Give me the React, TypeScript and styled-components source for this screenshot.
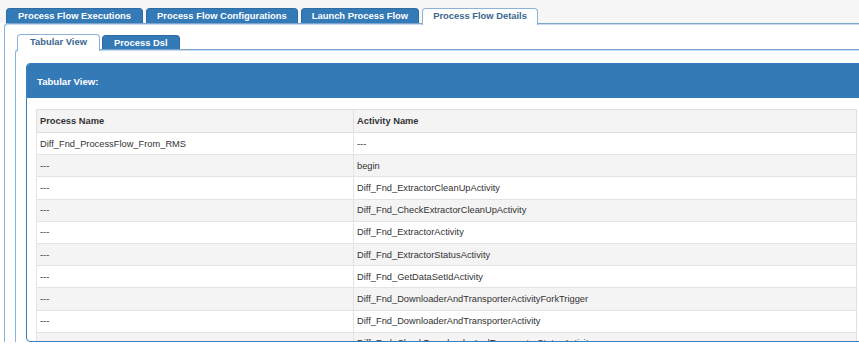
import styled, { createGlobalStyle } from "styled-components";

const GlobalStyle = createGlobalStyle`
  html, body {
    margin: 0;
    padding: 0;
    background: #fff;
    overflow: hidden;
  }
  body {
    font-family: "Liberation Sans", Arial, sans-serif;
    color: #333;
  }
`;

const Page = styled.div`
  width: 880px;
`;

const TabNav = styled.ul`
  display: flex;
  align-items: flex-end;
  gap: 3px;
  box-sizing: border-box;
  height: 23px;
  margin: 0;
  padding: 0 0 0 6px;
  list-style: none;
  background: #f6f6f6;
`;

const SubNav = styled.ul`
  display: flex;
  align-items: flex-end;
  gap: 2px;
  box-sizing: border-box;
  height: 15px;
  margin: 0;
  padding: 0 0 0 2px;
  list-style: none;
`;

const Tab = styled.li<{ $active?: boolean; $h: number; $px?: number }>`
  position: relative;
  z-index: 1;
  box-sizing: border-box;
  height: ${(p) => (p.$active ? p.$h + 2 : p.$h)}px;
  margin-bottom: ${(p) => (p.$active ? -2 : 0)}px;
  padding: 0 ${(p) => p.$px ?? 11}px;
  border: 1px solid ${(p) => (p.$active ? "#8cb2d8" : "#2e6da4")};
  border-bottom: none;
  border-radius: 4px 4px 0 0;
  background: ${(p) => (p.$active ? "#fff" : "#337ab7")};
  color: ${(p) => (p.$active ? "#3a6791" : "#fff")};
  font-size: 9.4px;
  font-weight: bold;
  line-height: ${(p) => p.$h - 1}px;
  white-space: nowrap;
  cursor: pointer;
`;

const Panel = styled.div<{ $pad: string }>`
  border-left: 1px solid #8cb2d8;
  border-top: 1px solid #7ba5ce;
  border-top-left-radius: 4px;
  box-shadow: inset 0 1px 0 #c5daee;
  padding: ${(p) => p.$pad};
`;

const OuterPanel = styled(Panel)`
  margin-left: 4px;
`;

const BluePanel = styled.section`
  width: 840px;
  border: 1px solid #3a7fbd;
  border-radius: 4px;
  overflow: hidden;
`;

const PanelHeading = styled.h3`
  display: flex;
  align-items: center;
  height: 34px;
  margin: 0;
  padding: 0 10px;
  background: #337ab7;
  color: #fff;
  font-size: 9.6px;
  font-weight: bold;
`;

const PanelBody = styled.div`
  box-sizing: border-box;
  height: 243px;
  padding: 11px 10px 0 9px;
  overflow: hidden;
`;

const Table = styled.table`
  width: 100%;
  border-collapse: collapse;
  table-layout: fixed;
  border: 1px solid #e0e0e0;
  font-size: 9.3px;
`;

const Th = styled.th`
  height: 22px;
  padding: 0 3px;
  border: 1px solid #e0e0e0;
  background: #f4f4f4;
  text-align: left;
  font-weight: bold;
  color: #333;
`;

const Row = styled.tr`
  &:nth-child(even) {
    background: #f4f4f4;
  }
`;

const Td = styled.td`
  height: 21.2px;
  padding: 0 3px;
  border-top: 1px solid #e3e3e3;
  border-left: 1px solid #e3e3e3;
  white-space: nowrap;
  color: #333;
`;

const rows: [string, string][] = [
  ["Diff_Fnd_ProcessFlow_From_RMS", "---"],
  ["---", "begin"],
  ["---", "Diff_Fnd_ExtractorCleanUpActivity"],
  ["---", "Diff_Fnd_CheckExtractorCleanUpActivity"],
  ["---", "Diff_Fnd_ExtractorActivity"],
  ["---", "Diff_Fnd_ExtractorStatusActivity"],
  ["---", "Diff_Fnd_GetDataSetIdActivity"],
  ["---", "Diff_Fnd_DownloaderAndTransporterActivityForkTrigger"],
  ["---", "Diff_Fnd_DownloaderAndTransporterActivity"],
  ["---", "Diff_Fnd_CheckDownloaderAndTransporterStatusActivity"],
  ["---", "Diff_Fnd_UploaderActivity"],
];

const topTabs = [
  "Process Flow Executions",
  "Process Flow Configurations",
  "Launch Process Flow",
  "Process Flow Details",
];

function App() {
  return (
    <Page>
      <GlobalStyle />
      <TabNav>
        {topTabs.map((t) => (
          <Tab
            key={t}
            $h={15}
            $px={t === "Process Flow Executions" ? 11 : 10}
            $active={t === "Process Flow Details"}
          >
            {t}
          </Tab>
        ))}
      </TabNav>
      <OuterPanel $pad="10px 0 0 10px">
        <SubNav>
          <Tab $h={15} $px={12} $active>
            Tabular View
          </Tab>
          <Tab $h={14} $px={11}>
            Process Dsl
          </Tab>
        </SubNav>
        <Panel $pad="13px 0 0 10px">
          <BluePanel>
            <PanelHeading>Tabular View:</PanelHeading>
            <PanelBody>
              <Table>
                <colgroup>
                  <col style={{ width: 317 }} />
                  <col />
                </colgroup>
                <thead>
                  <tr>
                    <Th>Process Name</Th>
                    <Th>Activity Name</Th>
                  </tr>
                </thead>
                <tbody>
                  {rows.map(([process, activity], i) => (
                    <Row key={i}>
                      <Td>{process}</Td>
                      <Td>{activity}</Td>
                    </Row>
                  ))}
                </tbody>
              </Table>
            </PanelBody>
          </BluePanel>
        </Panel>
      </OuterPanel>
    </Page>
  );
}

export default App;
